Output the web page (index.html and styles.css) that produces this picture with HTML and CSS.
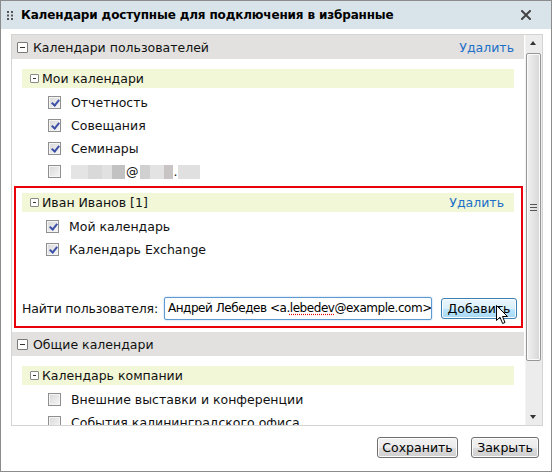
FILE: index.html
```html
<!DOCTYPE html>
<html lang="ru">
<head>
<meta charset="utf-8">
<title>Календари</title>
<link rel="stylesheet" href="styles.css">
</head>
<body>
<div class="dialog">
  <div class="titlebar">
    <svg class="grip" width="6" height="9" viewBox="0 0 6 9"><g fill="#555"><rect x="0" y="0" width="2" height="2"/><rect x="4" y="0" width="2" height="2"/><rect x="0" y="3.5" width="2" height="2"/><rect x="4" y="3.5" width="2" height="2"/><rect x="0" y="7" width="2" height="2"/><rect x="4" y="7" width="2" height="2"/></g></svg>
    <span class="title">Календари доступные для подключения в избранные</span>
    <svg class="close" width="10" height="10" viewBox="0 0 10 10"><path d="M1 1 L9 9 M9 1 L1 9" stroke="#444" stroke-width="2" stroke-linecap="square"/></svg>
  </div>
  <div class="content">
    <div class="panel">
      <div class="scroll">
        <div class="sec-head">
          <span class="tog"></span><span class="sec-title">Календари пользователей</span><a class="link">Удалить</a>
        </div>
        <div class="group">
          <div class="grp-head"><span class="tog small"></span><span>Мои календари</span></div>
          <div class="row"><span class="cb on"></span><span>Отчетность</span></div>
          <div class="row"><span class="cb on"></span><span>Совещания</span></div>
          <div class="row"><span class="cb on"></span><span>Семинары</span></div>
          <div class="row"><span class="cb"></span><span class="blur"><i class="b1"></i><i class="b2"></i><i class="b3"></i><i class="b4"></i><b>@</b><i class="b5"></i><i class="b6"></i><i class="b7"></i><b>.</b><i class="b8"></i></span></div>
        </div>
        <div class="highlight">
          <div class="grp-head"><span class="tog small"></span><span>Иван Иванов [1]</span><a class="link">Удалить</a></div>
          <div class="row"><span class="cb on"></span><span>Мой календарь</span></div>
          <div class="row"><span class="cb on"></span><span>Календарь Exchange</span></div>
          <div class="search">
            <span class="search-label">Найти пользователя:</span>
            <div class="input">Андрей Лебедев &lt;a.<span class="spell">lebedev</span>@example.com&gt;</div>
            <span class="btn hover">Добавить
              <svg class="cursor" width="13" height="20" viewBox="0 0 13 20"><path d="M0.5 0.5 L0.5 15.5 L4 12.2 L6.6 18.5 L9 17.5 L6.5 11.5 L11.5 11.5 Z" fill="#fff" stroke="#000" stroke-width="1" stroke-linejoin="miter"/></svg>
            </span>
          </div>
        </div>
        <div class="sec-head sec2">
          <span class="tog"></span><span class="sec-title">Общие календари</span>
        </div>
        <div class="group">
          <div class="grp-head"><span class="tog small"></span><span>Календарь компании</span></div>
          <div class="row"><span class="cb"></span><span>Внешние выставки и конференции</span></div>
          <div class="row"><span class="cb"></span><span>События калининградского офиса</span></div>
        </div>
      </div>
      <div class="scrollbar">
        <div class="arrow up"></div>
        <div class="thumb"><span class="grip-lines"></span></div>
        <div class="track"></div>
        <div class="arrow down"></div>
      </div>
    </div>
    <div class="footer">
      <span class="btn save">Сохранить</span>
      <span class="btn closebtn">Закрыть</span>
    </div>
  </div>
</div>
</body>
</html>
```

FILE: styles.css
```css
html, body {
  margin: 0;
  padding: 0;
  background: #fff;
}
body {
  font-family: "DejaVu Sans", Verdana, sans-serif;
  font-size: 12px;
  color: #111;
}
.dialog {
  width: 552px;
  height: 472px;
  box-sizing: border-box;
  border: 1px solid #8c8c8c;
  background: #fff;
  display: flex;
  flex-direction: column;
}
.titlebar {
  height: 28px;
  flex: none;
  background: #d9e4ea;
  display: flex;
  align-items: center;
  padding: 0 0 0 6px;
}
.grip { margin-right: 8px; }
.title {
  font-weight: bold;
  font-size: 12px;
  color: #000;
  letter-spacing: -0.15px;
}
.close {
  margin-left: auto;
  margin-right: 20px;
}
.content {
  flex: 1;
  display: flex;
  flex-direction: column;
  padding: 5px 8px 0 10px;
}
.panel {
  height: 392px;
  flex: none;
  box-sizing: border-box;
  border: 1px solid #d4d4d4;
  display: flex;
  overflow: hidden;
}
.scroll {
  flex: 1;
  overflow: hidden;
  padding-right: 1px;
}
.sec-head {
  height: 24px;
  background: #e2e1df;
  display: flex;
  align-items: center;
  padding: 0 10px 0 5px;
}
.sec2 { margin-top: 4px; }
.tog {
  border: 1px solid #7a7a7a;
  background: #fff;
  box-sizing: border-box;
  width: 11px;
  height: 11px;
  border-radius: 1px;
  position: relative;
  margin-right: 5px;
  flex: none;
}
.tog::after {
  content: "";
  position: absolute;
  left: 2px;
  right: 2px;
  top: 4px;
  height: 1px;
  background: #333;
}
.tog.small {
  width: 9px;
  height: 9px;
  border-color: #8a8a8a;
  margin-right: 3px;
}
.tog.small::after { top: 3px; left: 2px; right: 2px; }
.sec-title { font-size: 12.5px; }
.link {
  margin-left: auto;
  color: #1d6fc8;
  font-size: 12.5px;
}
.group {
  padding: 10px 10px 0 10px;
}
.grp-head {
  height: 19px;
  background: #f1f7d7;
  display: flex;
  align-items: center;
  padding: 0 10px 0 8px;
  font-size: 12.5px;
  margin-bottom: 3px;
}
.row {
  height: 23px;
  display: flex;
  align-items: center;
  padding-left: 26px;
  font-size: 12.5px;
  white-space: nowrap;
}
.cb {
  width: 13px;
  height: 13px;
  box-sizing: border-box;
  border: 1px solid #8f8f8f;
  background: linear-gradient(135deg, #d8d8d8, #f6f6f6);
  box-shadow: inset 0 0 0 1px #f4f4f4;
  margin-right: 10px;
  flex: none;
  position: relative;
}
.cb.on::after {
  content: "";
  position: absolute;
  left: 4px;
  top: 1px;
  width: 3px;
  height: 6px;
  border: solid #3d50a8;
  border-width: 0 2px 2px 0;
  transform: rotate(40deg);
}
.blur {
  display: flex;
  align-items: center;
  height: 13px;
}
.blur i { display: block; height: 14px; }
.blur b { font-weight: normal; font-size: 12.5px; margin: 0 1px; }
.b1 { width: 17px; background: #e4e4e4; }
.b2 { width: 14px; background: #d9d9d9; }
.b3 { width: 10px; background: #e1e1e1; }
.b4 { width: 13px; background: #c2c2c2; }
.b5 { width: 10px; background: #d0d0d0; }
.b6 { width: 14px; background: #e3e3e3; }
.b7 { width: 9px; background: #c9c4c4; }
.b8 { width: 22px; background: #e0e0e0; }
.highlight {
  margin: 3px 1px 0 2px;
  border: 2px solid #e8000a;
  padding: 5px 7px 4px 6px;
  height: 142px;
  box-sizing: border-box;
  display: flex;
  flex-direction: column;
}
.highlight .row { padding-left: 24px; }
.search {
  margin-top: auto;
  display: flex;
  align-items: center;
  height: 28px;
  white-space: nowrap;
}
.search-label {
  font-size: 12.5px;
  letter-spacing: -0.2px;
  margin-right: 6px;
  flex: none;
}
.input {
  width: 268px;
  height: 23px;
  flex: none;
  box-sizing: border-box;
  border: 1px solid #5e9ad2;
  border-radius: 2px;
  box-shadow: 0 0 2px #9cc7ee, inset 0 0 1px #c8e0f5;
  padding: 0 1px 0 3px;
  display: flex;
  align-items: center;
  font-size: 12px;
  letter-spacing: -0.45px;
  white-space: nowrap;
  overflow: hidden;
  color: #000;
}
.spell {
  text-decoration: underline dotted #e00;
  text-underline-offset: 2px;
}
.btn {
  height: 21px;
  flex: none;
  box-sizing: border-box;
  border: 1px solid #707070;
  border-radius: 3px;
  background: linear-gradient(#f2f2f2 0%, #ebebeb 50%, #dddddd 51%, #cfcfcf 100%);
  box-shadow: inset 0 0 0 1px #fcfcfc;
  display: inline-flex;
  align-items: center;
  justify-content: center;
  padding: 0 4px;
  font-size: 12.5px;
  color: #000;
  position: relative;
  white-space: nowrap;
}
.btn.hover {
  margin-left: 9px;
  width: 76px;
  border-color: #3c7fb1;
  background: linear-gradient(#eaf6fd 0%, #d9f0fc 50%, #bee6fd 51%, #a7d9f5 100%);
}
.cursor {
  position: absolute;
  left: 54px;
  top: 6px;
}
.scrollbar {
  width: 16px;
  flex: none;
  background: #ececec;
  border-left: 1px solid #f4f4f4;
  display: flex;
  flex-direction: column;
}
.arrow {
  height: 17px;
  flex: none;
  position: relative;
}
.arrow::after {
  content: "";
  position: absolute;
  left: 4px;
  width: 0;
  height: 0;
  border-left: 3.5px solid transparent;
  border-right: 3.5px solid transparent;
}
.arrow.up::after { top: 6px; border-bottom: 4px solid #333; }
.arrow.down::after { top: 7px; border-top: 4px solid #333; }
.thumb {
  height: 308px;
  margin: 1px 1px 0 0;
  box-sizing: border-box;
  border: 1px solid #979797;
  border-radius: 2px;
  background: linear-gradient(90deg, #f1f1f1, #e4e4e4 50%, #d6d6d6);
  box-shadow: inset 0 0 0 1px #fbfbfb;
  display: flex;
  align-items: center;
  justify-content: center;
  flex: none;
}
.grip-lines {
  width: 7px;
  height: 7px;
  background: repeating-linear-gradient(#555 0 1px, transparent 1px 3px);
}
.track { flex: 1; }
.footer {
  display: flex;
  justify-content: flex-end;
  gap: 13px;
  padding: 11px 4px 0 0;
}
.save { width: 81px; }
.closebtn { width: 68px; }
```
